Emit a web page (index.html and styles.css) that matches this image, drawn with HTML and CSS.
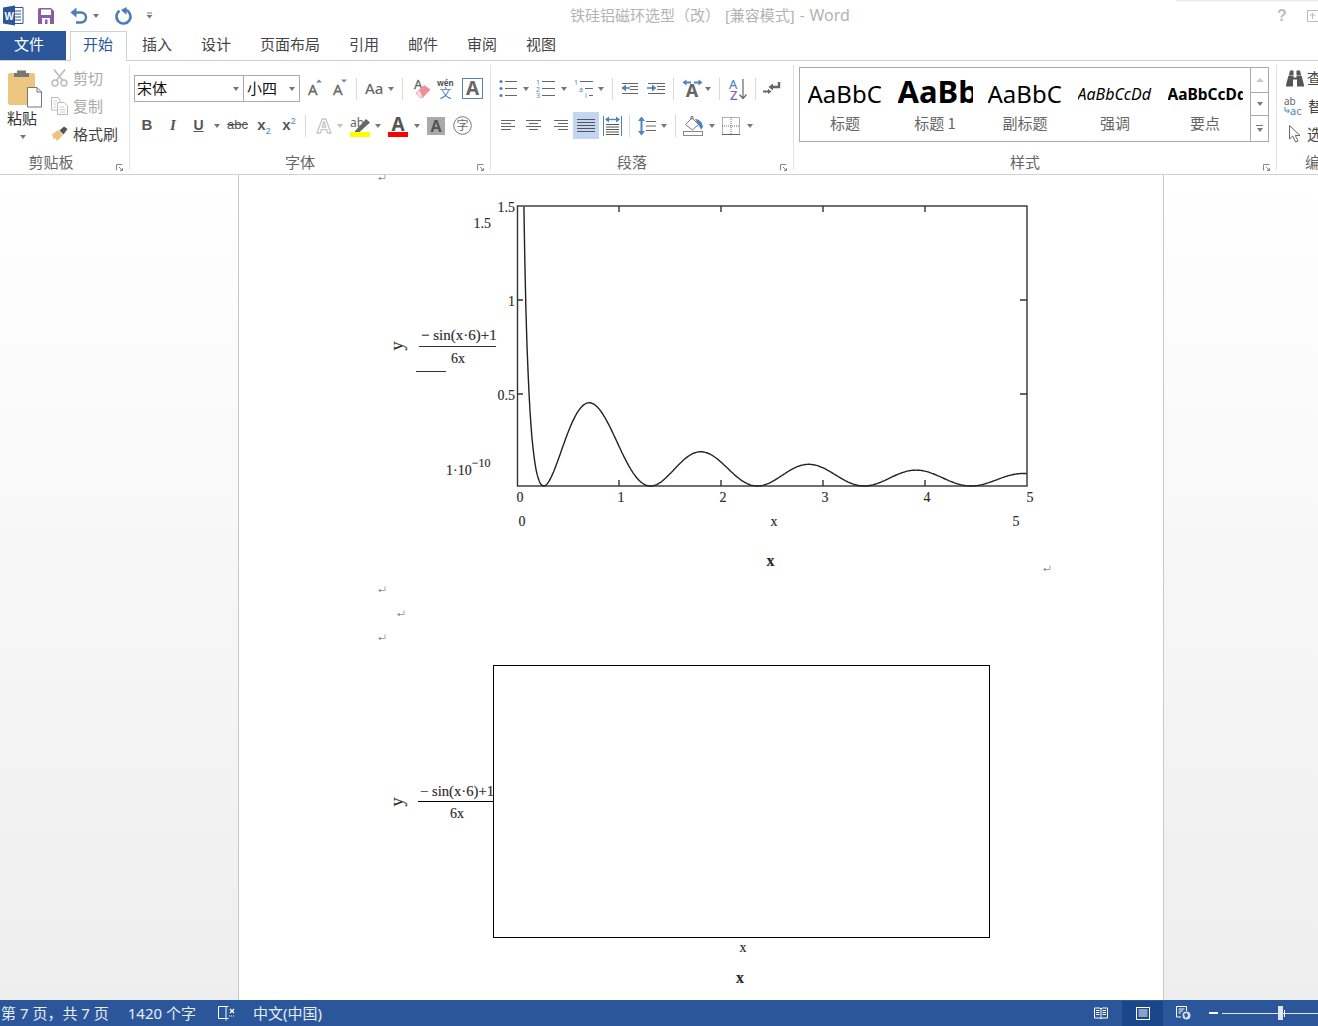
FILE: index.html
```html
<!DOCTYPE html>
<html lang="zh-CN">
<head>
<meta charset="utf-8">
<title>铁硅铝磁环选型（改） [兼容模式] - Word</title>
<link rel="stylesheet" href="styles.css">
</head>
<body>
<svg class="sprite" width="0" height="0"><symbol id="mark" viewBox="0 0 9 8"><path d="M8 0.5V4.5H2" fill="none" stroke="#999" stroke-width="0.9"/><path d="M3.6 2.8L1 4.5L3.6 6.2Z" fill="#888"/></symbol></svg>
<div class="app">
  <header class="titlebar">
    <svg class="ic ml3" width="21" height="21" viewBox="0 0 21 21"><path d="M8 2.5H20V18.5H8" fill="#fff" stroke="#2b579a"/><path d="M11 6h7M11 9h7M11 12h7M11 15h7" stroke="#2b579a"/><path d="M0 2.5L12 0.5V20.5L0 18.5Z" fill="#2b579a"/><text x="1.5" y="15" class="logo-w">W</text></svg>
    <svg class="ic ml14" width="16" height="16" viewBox="0 0 16 16"><path d="M0 1.5A1.5 1.5 0 0 1 1.5 0H13L16 3V16H0Z" fill="#8b5ba8"/><rect x="3" y="1.5" width="10" height="5.5" fill="#fff"/><rect x="4" y="10" width="8" height="6" fill="#fff"/><rect x="7" y="11.5" width="2.5" height="4.5" fill="#8b5ba8"/></svg>
    <svg class="ic ml16" width="18" height="17" viewBox="0 0 18 17"><path d="M2.5 5.5H11A5 5 0 0 1 11 15.5H6" fill="none" stroke="#4a7eb8" stroke-width="2.4"/><path d="M6.5 0.5V10.5L0.5 5.5Z" fill="#4a7eb8"/></svg>
    <span class="caret ml5"></span>
    <svg class="ic ml15" width="18" height="18" viewBox="0 0 18 18"><path d="M5.5 3.8A7 7 0 1 0 12 3" fill="none" stroke="#4a7eb8" stroke-width="2.6"/><path d="M12.5 0L12.5 8L7 3Z" fill="#4a7eb8"/></svg>
    <svg class="ic ml14" width="7" height="7" viewBox="0 0 7 7"><path d="M1 1H6" stroke="#777"/><path d="M0.5 3H6.5L3.5 6.5Z" fill="#777"/></svg>
    <div class="doc-title">铁硅铝磁环选型（改） [兼容模式] - <span class="t-word">Word</span></div>
    <div class="win-controls">
      <span class="help">?</span>
      <svg class="ic ml20" width="11" height="15" viewBox="0 0 11 15"><path d="M0.5 2.5H11M0.5 2.5V13.5H11" fill="none" stroke="#bbb"/><path d="M5.5 11V6M3 8L5.5 5.5L8 8" fill="none" stroke="#bbb"/></svg>
    </div>
    <div class="shade"></div>
  </header>

  <nav class="tabs">
    <div class="tab-file">文件</div>
    <div class="tab-active">开始</div>
    <div class="tab-list">
      <span>插入</span><span>设计</span><span>页面布局</span><span>引用</span><span>邮件</span><span>审阅</span><span>视图</span>
    </div>
  </nav>

  <section class="ribbon">
    <div class="group g-clip">
      <div class="clip-body">
        <div class="paste">
          <svg class="ic paste-ic" width="34" height="38" viewBox="0 0 34 38"><rect x="0" y="4" width="27" height="32" rx="2" fill="#ecc57e"/><path d="M9 4V1.5H18V4H21V8H6V4Z" fill="#777"/><path d="M19.5 18.5H29L33.5 23V38H19.5Z" fill="#fff" stroke="#777"/><path d="M29 18.5V23H33.5" fill="none" stroke="#777"/></svg>
          <div class="paste-label">粘贴</div>
          <span class="caret paste-caret"></span>
        </div>
        <div class="clip-list">
          <div class="clip-row off"><svg class="ic" width="17" height="18" viewBox="0 0 17 18"><path d="M3 0.5L12 12M14 0.5L5 12" stroke="#bbb" stroke-width="1.6"/><circle cx="4" cy="14" r="3" fill="#fff" stroke="#bbb" stroke-width="1.4"/><circle cx="13" cy="14" r="3" fill="#fff" stroke="#bbb" stroke-width="1.4"/></svg><span>剪切</span></div>
          <div class="clip-row off"><svg class="ic" width="17" height="18" viewBox="0 0 17 18"><path d="M0.5 0.5H7L9 3V13H0.5Z" fill="#fff" stroke="#bbb"/><path d="M6.5 5.5H13L16.5 9V17.5H6.5Z" fill="#fff" stroke="#bbb"/><path d="M2.5 4H6M2.5 7H5M2.5 10H5M8.5 10H13M8.5 12.5H14.5M8.5 15H14.5" stroke="#ccc"/></svg><span>复制</span></div>
          <div class="clip-row"><svg class="ic" width="17" height="16" viewBox="0 0 17 16"><path d="M1 8.5L7 4L12 9L6 15L4 12L2.5 13Z" fill="#edc27a"/><path d="M8.5 4.5L13 0.5L16.5 3L12.5 8.5Z" fill="#555"/></svg><span>格式刷</span></div>
        </div>
      </div>
      <div class="group-foot"><span class="group-name name-clip">剪贴板</span><svg class="launcher" width="7" height="7" viewBox="0 0 7 7"><path d="M0.5 6.5V0.5H6.5M3 3L6.5 6.5M6.5 4V6.5H4" fill="none" stroke="#888"/></svg></div>
    </div>
    <div class="divider"></div>

    <div class="group g-font">
      <div class="row row-top">
        <div class="combo combo-name"><span>宋体</span><span class="caret"></span></div>
        <div class="combo combo-size"><span>小四</span><span class="caret"></span></div>
        <svg class="ic ml8" width="15" height="20" viewBox="0 0 15 20"><text x="0" y="16" class="t-a">A</text><path d="M8 3.5L11 0.5L14 3.5Z" fill="#5b8ec4"/></svg>
        <svg class="ic ml10" width="15" height="20" viewBox="0 0 15 20"><text x="0" y="16" class="t-a">A</text><path d="M8 0.5H14L11 3.5Z" fill="#5b8ec4"/></svg>
        <span class="sep ml8"></span>
        <span class="aa ml8">Aa</span>
        <span class="caret ml4"></span>
        <span class="sep ml8"></span>
        <svg class="ic ml10" width="19" height="21" viewBox="0 0 19 21"><text x="1" y="11" class="t-a small">A</text><path d="M3 15L11 7L17.5 11.5L10 19.5H7Z" fill="#ee8f98"/><path d="M3 15L7 19.5H10L6.5 12Z" fill="#fbdfe2" stroke="#ee8f98" stroke-width="0.6"/></svg>
        <svg class="ic ml5" width="17" height="21" viewBox="0 0 17 21"><text x="0" y="8" class="t-w">wén</text><text x="2.5" y="20" class="t-wen">文</text></svg>
        <svg class="ic ml8" width="21" height="21" viewBox="0 0 21 21"><rect x="0.5" y="0.5" width="20" height="20" fill="#fff" stroke="#4f84bc"/><text x="10.5" y="17" class="t-box">A</text></svg>
      </div>
      <div class="row row-low">
        <span class="fmt fmt-b ml7">B</span>
        <span class="fmt fmt-i ml14">I</span>
        <span class="fmt fmt-u ml13">U</span>
        <span class="caret ml9"></span>
        <span class="fmt fmt-s ml7">abc</span>
        <span class="fmt fmt-x ml8">x<sub>2</sub></span>
        <span class="fmt fmt-x ml9">x<sup>2</sup></span>
        <span class="sep ml8"></span>
        <svg class="ic ml9" width="18" height="22" viewBox="0 0 18 22"><text x="9" y="18" class="t-out">A</text></svg>
        <span class="caret caret-off ml4"></span>
        <svg class="ic ml7 hl" width="21" height="21" viewBox="0 0 21 21"><text x="0" y="11" class="t-ab">ab</text><path d="M5 15L16 3L20 6.500L9 16.500L5 16.500Z" fill="#666"/><rect x="0" y="16" width="20" height="5" fill="#ff0"/></svg>
        <span class="caret ml4"></span>
        <svg class="ic ml7 hl" width="21" height="21" viewBox="0 0 21 21"><text x="10" y="15" class="t-red">A</text><rect x="0" y="16" width="20" height="5" fill="#f00"/></svg>
        <span class="caret ml5"></span>
        <svg class="ic ml7" width="18" height="18" viewBox="0 0 18 18"><rect width="18" height="18" fill="#aaa"/><text x="9" y="15" class="t-grey">A</text></svg>
        <svg class="ic ml8" width="19" height="19" viewBox="0 0 19 19"><circle cx="9.5" cy="9.5" r="8.800" fill="none" stroke="#777"/><text x="9.5" y="14" class="t-zi">字</text></svg>
      </div>
      <div class="group-foot"><span class="group-name name-font">字体</span><svg class="launcher" width="7" height="7" viewBox="0 0 7 7"><path d="M0.5 6.5V0.5H6.5M3 3L6.5 6.5M6.5 4V6.5H4" fill="none" stroke="#888"/></svg></div>
    </div>
    <div class="divider"></div>

    <div class="group g-para">
      <div class="row row-top">
        <svg class="ic" width="19" height="19" viewBox="0 0 19 19"><g fill="#4f84bc"><circle cx="2" cy="2.5" r="1.6"/><circle cx="2" cy="9.5" r="1.6"/><circle cx="2" cy="16.5" r="1.6"/></g><path d="M6 2.5H18M6 9.5H18M6 16.5H18" stroke="#666"/></svg>
        <span class="caret ml5"></span>
        <svg class="ic ml7" width="20" height="19" viewBox="0 0 20 19"><text x="0" y="5.5" class="t-n">1</text><text x="0" y="12.5" class="t-n">2</text><text x="0" y="19" class="t-n">3</text><path d="M6 2.5H19M6 9.5H19M6 16.5H19" stroke="#666"/></svg>
        <span class="caret ml5"></span>
        <svg class="ic ml7" width="20" height="19" viewBox="0 0 20 19"><text x="0" y="5.5" class="t-n">1</text><text x="5" y="12.5" class="t-n">a</text><text x="11" y="19" class="t-n">i</text><path d="M6 2.5H19M11 9.5H19M15 16.5H19" stroke="#666"/></svg>
        <span class="caret ml4"></span>
        <span class="sep ml8"></span>
        <svg class="ic ml8" width="19" height="13" viewBox="0 0 19 13"><path d="M1 1.5H17M9 4.5H17M9 7.5H17M1 11.500H17" stroke="#666"/><path d="M1 6H9" stroke="#4f84bc" stroke-width="1.6"/><path d="M5 2.5L0.500 6L5 9.500Z" fill="#4f84bc"/></svg>
        <svg class="ic ml7" width="19" height="13" viewBox="0 0 19 13"><path d="M1 1.5H18M10 4.5H18M10 7.5H18M1 11.500H18" stroke="#666"/><path d="M0 6H7" stroke="#4f84bc" stroke-width="1.6"/><path d="M5 2.5L9.500 6L5 9.500Z" fill="#4f84bc"/></svg>
        <span class="sep ml7"></span>
        <svg class="ic ml8" width="21" height="19" viewBox="0 0 21 19"><path d="M2 3.5H9M12 3.500H19" stroke="#4f84bc" stroke-width="1.8"/><path d="M4.500 0.500L0.500 3.500L4.500 6.500ZM16.500 0.500L20.500 3.500L16.500 6.500Z" fill="#4f84bc"/><text x="10" y="18" class="t-xa">A</text></svg>
        <span class="caret ml2"></span>
        <span class="sep ml8"></span>
        <svg class="ic ml9" width="19" height="22" viewBox="0 0 19 22"><text x="0" y="11" class="t-sa">A</text><text x="1" y="22" class="t-sz">Z</text><path d="M14 1V20M10.5 16.500L14 20.500L17.500 16.500" fill="none" stroke="#666" stroke-width="1.2"/></svg>
        <span class="sep ml7"></span>
        <svg class="ic ml7" width="18" height="15" viewBox="0 0 18 15"><path d="M16 1V6H9" fill="none" stroke="#666" stroke-width="2.4"/><path d="M10 2.5L5.5 6L10 9.5Z" fill="#666"/><path d="M0 10.5H6" stroke="#666" stroke-width="2"/><path d="M5 8L8.5 10.5L5 13Z" fill="#666"/></svg>
      </div>
      <div class="row row-low">
        <svg class="ic ml2" width="15" height="13" viewBox="0 0 15 13"><path d="M0 1.5H14M0 4.5H10M0 7.5H14M0 10.5H10" stroke="#666"/></svg>
        <svg class="ic ml10" width="15" height="13" viewBox="0 0 15 13"><path d="M0 1.5H15M3 4.5H12M0 7.5H15M3 10.5H12" stroke="#666"/></svg>
        <svg class="ic ml12" width="15" height="13" viewBox="0 0 15 13"><path d="M1 1.5H15M5 4.5H15M1 7.5H15M5 10.5H15" stroke="#666"/></svg>
        <div class="justify ml5"><svg class="ic" width="18" height="15" viewBox="0 0 18 15"><path d="M0 1.5H18M0 4.5H18M0 7.5H18M0 10.5H18M0 13.5H18" stroke="#555"/></svg></div>
        <svg class="ic ml4" width="19" height="20" viewBox="0 0 19 20"><path d="M3 3.500H16" stroke="#4f84bc" stroke-width="1.4"/><path d="M6 0.500L2 3.500L6 6.500ZM13 0.500L17 3.500L13 6.500Z" fill="#4f84bc"/><path d="M0.5 0V20M18.500 0V20" stroke="#4f84bc"/><path d="M3 8.500H16M3 11H16M3 13.500H16M3 16H16M3 18.500H16" stroke="#555"/></svg>
        <span class="sep ml7"></span>
        <svg class="ic ml8" width="18" height="20" viewBox="0 0 18 20"><path d="M3.5 2V18" stroke="#4f84bc" stroke-width="2"/><path d="M0 5L3.5 0.5L7 5ZM0 15L3.5 19.5L7 15Z" fill="#4f84bc"/><path d="M8 5.5H18M8 10H18M8 14.5H18" stroke="#666"/></svg>
        <span class="caret ml5"></span>
        <span class="sep ml8"></span>
        <svg class="ic ml7" width="21" height="20" viewBox="0 0 21 20"><path d="M2.500 8.500L9 2L15.500 8.500L9.500 14Z" fill="#fff" stroke="#777"/><path d="M8 4V0.500H10V3" fill="none" stroke="#777"/><path d="M12 3C16 3 19.500 6 20 11L18 13.500L16 10Z" fill="#4f84bc"/><rect x="0.5" y="15.5" width="19" height="4" fill="#fff" stroke="#888"/></svg>
        <span class="caret ml5"></span>
        <svg class="ic ml7" width="18" height="18" viewBox="0 0 18 18"><path d="M0.5 0.500H17.500V17.500M0.500 0.500V17.500M9 0V17M0 9H18" fill="none" stroke="#666" stroke-dasharray="1 1"/><path d="M0 17.500H18" stroke="#666"/></svg>
        <span class="caret ml7"></span>
      </div>
      <div class="group-foot"><span class="group-name name-para">段落</span><svg class="launcher" width="7" height="7" viewBox="0 0 7 7"><path d="M0.5 6.5V0.5H6.5M3 3L6.5 6.5M6.5 4V6.5H4" fill="none" stroke="#888"/></svg></div>
    </div>
    <div class="divider"></div>

    <div class="group g-style">
      <div class="gallery">
        <div class="style-item"><div class="preview p-title">AaBbC</div><div class="style-name">标题</div></div>
        <div class="style-item"><div class="preview p-h1">AaBbC</div><div class="style-name">标题 1</div></div>
        <div class="style-item"><div class="preview p-title">AaBbC</div><div class="style-name">副标题</div></div>
        <div class="style-item"><div class="preview p-em">AaBbCcDd</div><div class="style-name">强调</div></div>
        <div class="style-item"><div class="preview p-strong">AaBbCcDd</div><div class="style-name">要点</div></div>
        <div class="gallery-scroll">
          <div class="sc sc-up"><span class="tri-up"></span></div>
          <div class="sc sc-mid"><span class="caret"></span></div>
          <div class="sc sc-more"><span class="more-line"></span><span class="caret"></span></div>
        </div>
      </div>
      <div class="group-foot"><span class="group-name">样式</span><svg class="launcher" width="7" height="7" viewBox="0 0 7 7"><path d="M0.5 6.5V0.5H6.5M3 3L6.5 6.5M6.5 4V6.5H4" fill="none" stroke="#888"/></svg></div>
    </div>
    <div class="divider"></div>

    <div class="group g-edit">
      <div class="edit-list">
        <div class="edit-row"><svg class="ic" width="18" height="17" viewBox="0 0 18 17"><path d="M3 5L4 0.500H7.500V5ZM10.500 5V0.500H14L15 5Z" fill="#555"/><path d="M2.500 5.500H7.500V7.500H10.500V5.500H15.500L18 15V16.500H11V9.500H7V16.500H0V15Z" fill="#555"/></svg><span>查找</span></div>
        <div class="edit-row"><svg class="ic ab-ic" width="20" height="18" viewBox="0 0 20 18"><text x="0" y="8" class="t-rb">ab</text><text x="6" y="18" class="t-rc">ac</text><path d="M1 10V14H5M3.500 12L5.500 14L3.500 16" fill="none" stroke="#4f84bc"/></svg><span>替换</span></div>
        <div class="edit-row"><svg class="ic ml3" width="12" height="18" viewBox="0 0 12 18"><path d="M0.5 0.5V14L3.7 11L6.5 17L9 16L6.3 10.5H11Z" fill="#fff" stroke="#666"/></svg><span class="edit-t3">选择</span></div>
      </div>
      <div class="group-foot foot-edit"><span class="group-name">编辑</span></div>
    </div>
  </section>

  <main class="doc">
    <div class="page">
      <svg class="fig fig-one" width="700" height="403" viewBox="370 175 700 403">
        <use href="#mark" x="377" y="174" width="9" height="8"/>
        <rect x="517.5" y="206" width="509.5" height="280" class="frame"/>
        <path class="tick" d="M619 206v6M721 206v6M823 206v6M925 206v6M619 486v-6M721 486v-6M823 486v-6M925 486v-6M517 300h6M517 394h6M1027 300h-7M1027 394h-7"/>
        <path id="curve" class="curve" d=""/>
        <text class="pt end" x="515" y="212">1.5</text>
        <text class="pt end" x="491" y="228">1.5</text>
        <text class="pt end" x="515" y="306">1</text>
        <text class="pt end" x="515" y="400">0.5</text>
        <text class="pt" x="446" y="475">1·10<tspan class="sup" dy="-8">−10</tspan></text>
        <text class="pt pt-y" transform="translate(403 346) rotate(-90)">y</text>
        <text class="pt pt-f" x="421" y="340">− sin(x·6)+1</text>
        <path class="rule" d="M419 346.5H496M416 371.5H446"/>
        <text class="pt" x="451" y="363">6x</text>
        <text class="pt mid" x="520" y="502">0</text>
        <text class="pt mid" x="621" y="502">1</text>
        <text class="pt mid" x="723" y="502">2</text>
        <text class="pt mid" x="825" y="502">3</text>
        <text class="pt mid" x="927" y="502">4</text>
        <text class="pt mid" x="1030" y="502">5</text>
        <text class="pt mid" x="522" y="526">0</text>
        <text class="pt mid" x="774" y="526">x</text>
        <text class="pt mid" x="1016" y="526">5</text>
        <text class="pt pt-x mid" x="770.5" y="566">x</text>
        <use href="#mark" x="1042" y="565" width="9" height="8"/>
      </svg>
      <div class="mark-row"><svg class="mark" width="9" height="8"><use href="#mark"/></svg></div>
      <div class="mark-row indent"><svg class="mark" width="9" height="8"><use href="#mark"/></svg></div>
      <div class="mark-row"><svg class="mark" width="9" height="8"><use href="#mark"/></svg></div>
      <svg class="fig fig-two" width="700" height="350" viewBox="370 650 700 350">
        <rect x="493.5" y="665.5" width="496" height="272" class="frame-thin"/>
        <path class="rule-thin" d="M418 801.5H493"/>
        <text class="pt pt-y" transform="translate(403 802) rotate(-90)">y</text>
        <text class="pt pt-f pt-f2" x="420" y="796">− sin(x·6)+1</text>
        <text class="pt" x="450" y="818">6x</text>
        <text class="pt mid" x="743" y="952">x</text>
        <text class="pt pt-x mid" x="740" y="983">x</text>
      </svg>
    </div>
  </main>

  <footer class="status">
    <span class="st-page">第 7 页，共 7 页</span>
    <span class="st-words">1420 个字</span>
    <svg class="ic st-book" width="18" height="16" viewBox="0 0 18 16"><path d="M8 1.5H0.5V13.5H8M8 1.5V15.5M8 1.5L10.5 1.5M8 13.5H10.5" fill="none" stroke="#fff"/><path d="M12 4L16 8M16 4L12 8" stroke="#fff" stroke-width="1.4"/><path d="M11 11H17" stroke="#fff" stroke-dasharray="1 1"/></svg>
    <span class="st-lang">中文(中国)</span>
    <div class="st-right">
      <svg class="ic" width="14" height="13" viewBox="0 0 14 13"><path d="M0.5 1H6L7 2L8 1H13.5V11H8L7 12L6 11H0.5Z" fill="none" stroke="#fff"/><path d="M2 3.5H5.5M2 5.5H5.5M2 7.5H5.5M8.5 3.5H12M8.5 5.5H12M8.5 7.5H12M7 2V12" stroke="#fff"/></svg>
      <div class="st-active"><svg class="ic" width="14" height="13" viewBox="0 0 14 13"><rect x="0.5" y="0.5" width="13" height="12" fill="none" stroke="#fff"/><path d="M2.5 3H11.5M2.5 5H11.5M2.5 7H11.5M2.5 9H11.5" stroke="#fff"/></svg></div>
      <svg class="ic ml13" width="15" height="14" viewBox="0 0 15 14"><path d="M10.5 5V0.5H0.5V11H5" fill="none" stroke="#fff"/><path d="M2.5 3H8.5M2.5 5H7M2.5 7H5" stroke="#fff"/><circle cx="10.5" cy="9.5" r="4" fill="#d6deea"/><path d="M8 8L11 7L12 10L9.5 12" fill="#2b579a"/></svg>
      <span class="zoom-minus"></span>
      <div class="slider"><span class="thumb"></span><span class="thumb-tick"></span></div>
    </div>
  </footer>
</div>
<script src="plot.js"></script>
</body>
</html>
```
FILE: styles.css
```css
* { box-sizing: border-box; }
html, body { margin: 0; padding: 0; }
body {
  width: 1318px;
  height: 1026px;
  overflow: hidden;
  background: #fff;
  color: #444;
  font: 15px/20px "Noto Sans CJK SC", "Noto Sans", sans-serif;
}
.sprite { position: absolute; }
.app { display: flex; flex-direction: column; height: 1026px; width: 1318px; overflow: hidden; }
.ic { display: block; flex: none; overflow: visible; }

.ml2 { margin-left: 2px; } .ml3 { margin-left: 3px; } .ml4 { margin-left: 4px; }
.ml5 { margin-left: 5px; } .ml7 { margin-left: 7px; } .ml8 { margin-left: 8px; }
.ml9 { margin-left: 9px; } .ml10 { margin-left: 10px; } .ml12 { margin-left: 12px; }
.ml13 { margin-left: 13px; } .ml14 { margin-left: 14px; } .ml15 { margin-left: 15px; }
.ml16 { margin-left: 16px; } .ml20 { margin-left: 20px; }

.caret {
  display: block; flex: none; width: 0; height: 0;
  border-left: 3.5px solid transparent;
  border-right: 3.5px solid transparent;
  border-top: 4px solid #777;
}
.caret-off { border-top-color: #c4c4c4; }
.sep { display: block; flex: none; width: 1px; height: 22px; background: #d9d9d9; }

/* title bar */
.titlebar { position: relative; flex: none; height: 31px; display: flex; align-items: center; }
.logo-w { font: bold 10px "Liberation Sans", sans-serif; fill: #fff; }
.doc-title { margin-left: 417px; padding-bottom: 2px; color: #b3b3b3; white-space: pre; word-spacing: 1px; font-family: "Noto Sans", "Noto Sans CJK SC", sans-serif; font-size: 15px; }
.t-word { font-size: 16px; }
.win-controls { margin-left: auto; display: flex; align-items: center; width: 41px; flex: none; }
.help { width: 10px; font: bold 16px "Liberation Sans", sans-serif; color: #bdbdbd; text-align: center; }
.shade { position: absolute; left: 1176px; right: 0; top: 0; height: 2px; background: linear-gradient(#e6e6e6, #fafafa); }

/* tabs */
.tabs { flex: none; height: 30px; display: flex; border-bottom: 1px solid #d2d2d2; }
.tab-file { width: 66px; height: 29px; padding-right: 8px; background: #2b579a; color: #fff; text-align: center; line-height: 26px; }
.tab-active {
  width: 57px; height: 30px; margin-left: 4px; padding-right: 1px; background: #fff;
  border: 1px solid #d2d2d2; border-bottom: 0; color: #2b579a; text-align: center; line-height: 24px;
}
.tab-list { display: flex; gap: 29px; padding-left: 15px; line-height: 26px; }

/* ribbon */
.ribbon { flex: none; height: 114px; display: flex; border-bottom: 1px solid #d2d2d2; align-items: flex-start; }
.divider { flex: none; width: 1px; height: 105px; margin-top: 4px; background: #e1e1e1; }
.group { flex: none; height: 113px; display: flex; flex-direction: column; }
.group-foot { margin-top: auto; height: 20px; display: flex; align-items: center; position: relative; padding-bottom: 5px; flex: none; }
.group-name { flex: 1; text-align: center; color: #666; padding-right: 20px; }
.launcher { position: absolute; right: 6px; bottom: 3px; }
.name-clip { padding-right: 27px; }
.name-font { padding-right: 24px; }
.name-para { padding-right: 28px; }

.g-clip { width: 129px; }
.clip-body { display: flex; }
.paste { width: 44px; padding-left: 7px; display: flex; flex-direction: column; }
.paste-ic { margin: 8px 0 0 1px; }
.paste-label { width: 30px; text-align: center; margin-top: 1px; color: #333; }
.paste-caret { margin: 7px 0 0 13px; }
.clip-list { margin: 3px 0 0 7px; }
.clip-row { height: 28px; display: flex; align-items: center; gap: 5px; white-space: nowrap; }
.clip-row.off { color: #aaa; }

.g-font { width: 360px; padding-left: 4px; }
.g-para { width: 302px; padding-left: 8px; }
.row { display: flex; align-items: center; }
.row-top { height: 27px; margin-top: 14px; }
.row-low { height: 27px; margin-top: 10px; }

.combo {
  height: 27px; border: 1px solid #ababab; display: flex; align-items: center;
  justify-content: space-between; padding: 0 4px 2px 2px; color: #111; flex: none;
}
.combo-name { width: 110px; }
.combo-size { width: 56px; padding-left: 3px; border-left: 0; }
.combo .caret { margin-top: 2px; }

.t-a { font: 15px "Noto Sans", sans-serif; fill: #666; stroke: #666; stroke-width: 0.3; }
.t-a.small { font-size: 13px; }
.t-w { font: bold 8px "Noto Sans", sans-serif; fill: #555; }
.t-wen { font: 12px "Noto Sans CJK SC", sans-serif; fill: #4f84bc; }
.t-box { font: bold 19px "Noto Sans", sans-serif; fill: #666; text-anchor: middle; }
.t-out { font: bold 20px "Noto Sans", sans-serif; fill: #fff; stroke: #bbb; stroke-width: 1; text-anchor: middle; }
.t-ab { font: 12px "Noto Sans", sans-serif; fill: #666; }
.t-red { font: bold 19px "Noto Sans", sans-serif; fill: #555; text-anchor: middle; }
.t-grey { font: bold 16px "Noto Sans", sans-serif; fill: #555; text-anchor: middle; }
.t-zi { font: 12px "Noto Sans CJK SC", sans-serif; fill: #666; text-anchor: middle; }
.t-n { font: 7px "Noto Sans", sans-serif; fill: #4f84bc; }
.t-xa { font: bold 18px "Noto Sans", sans-serif; fill: #666; text-anchor: middle; }
.t-sa { font: 13px "Noto Sans", sans-serif; fill: #4f84bc; stroke: #4f84bc; stroke-width: 0.2; }
.t-sz { font: 13px "Noto Sans", sans-serif; fill: #8a5ba8; stroke: #8a5ba8; stroke-width: 0.2; }
.t-rb { font: 10px "Noto Sans", sans-serif; fill: #666; }
.t-rc { font: 11px "Noto Sans", sans-serif; fill: #4f84bc; }
.hl { margin-top: 1px; }

.aa { width: 19px; padding-bottom: 1px; font: 500 15px/20px "Noto Sans", sans-serif; color: #666; flex: none; white-space: nowrap; }
.fmt { display: block; flex: none; padding-bottom: 2px; font-family: "Liberation Sans", sans-serif; color: #555; text-align: center; line-height: 20px; white-space: nowrap; }
.fmt-b { width: 12px; font-weight: bold; font-size: 15px; }
.fmt-i { width: 12px; font: italic bold 15px/20px "Liberation Serif", serif; }
.fmt-u { width: 13px; font-weight: bold; font-size: 14px; text-decoration: underline; }
.fmt-s { width: 21px; font-size: 13px; text-decoration: line-through; }
.fmt-x { width: 16px; font-weight: bold; font-size: 15px; }
.fmt-x sub, .fmt-x sup { font-size: 9px; font-weight: normal; color: #4f84bc; line-height: 0; }
.justify { width: 26px; height: 27px; background: #c3d6f2; display: flex; align-items: center; justify-content: center; flex: none; }

.g-style { width: 482px; }
.gallery {
  margin: 6px 0 0 5px; width: 470px; height: 75px; border: 1px solid #ababab;
  display: flex;
}
.style-item { width: 90px; flex: none; display: flex; flex-direction: column; align-items: center; }
.preview { width: 75px; height: 45px; line-height: 52px; overflow: hidden; white-space: nowrap; color: #000; font-family: "Noto Sans", sans-serif; text-align: left; }
.p-title { font-size: 24px; }
.p-h1 { font-size: 31px; font-weight: bold; line-height: 46px; }
.p-em { font-size: 16px; font-style: italic; }
.p-strong { font-size: 15.5px; font-weight: bold; }
.style-name { color: #666; line-height: 20px; }
.gallery-scroll { flex: none; width: 18px; border-left: 1px solid #ababab; display: flex; flex-direction: column; }
.sc { display: flex; flex-direction: column; align-items: center; justify-content: center; gap: 2px; }
.sc-up { height: 25px; border-bottom: 1px solid #ababab; }
.sc-mid { height: 23px; border-bottom: 1px solid #ababab; }
.sc-more { flex: 1; }
.tri-up { width: 0; height: 0; border-left: 4px solid transparent; border-right: 4px solid transparent; border-bottom: 4px solid #c8c8c8; }
.more-line { width: 7px; height: 1px; background: #777; }

.g-edit { width: 41px; padding-left: 9px; }
.edit-list { margin-top: 3px; }
.edit-row { height: 28px; display: flex; align-items: center; gap: 3px; white-space: nowrap; color: #444; }
.ab-ic { margin-left: -2px; margin-right: 1px; }
.edit-t3 { margin-left: 3px; }
.foot-edit { margin-left: -9px; width: 90px; }
.foot-edit .group-name { text-align: left; padding: 0 0 0 28px; }

/* document */
.doc { flex: none; height: 825px; background: linear-gradient(#fff, #eee); }
.page {
  margin-left: 238px; width: 926px; height: 825px; background: #fff;
  border-left: 1px solid #c8c8c8; border-right: 1px solid #c8c8c8;
  display: flex; flex-direction: column;
}
.fig { display: block; flex: none; margin-left: 131px; }
.frame { fill: none; stroke: #333; stroke-width: 1.4; }
.frame-thin { fill: none; stroke: #000; stroke-width: 1; }
.tick { fill: none; stroke: #333; stroke-width: 1.4; }
.curve { fill: none; stroke: #222; stroke-width: 1.4; }
.rule { fill: none; stroke: #333; stroke-width: 1; }
.rule-thin { fill: none; stroke: #000; stroke-width: 1; }
.pt { font: 14px "Liberation Serif", serif; fill: #2a2a2a; stroke: #2a2a2a; stroke-width: 0.15; }
.pt.end { text-anchor: end; }
.pt.mid { text-anchor: middle; }
.sup { font-size: 12px; }
.pt-y { font-size: 18px; text-anchor: middle; }
.pt-f { font-size: 15px; }
.pt-f2 { font-size: 14.7px; }
.pt-x { font-size: 16px; font-weight: bold; }
.mark-row { flex: none; height: 24px; padding-left: 138px; display: flex; align-items: center; }
.mark-row.indent { padding-left: 157px; }
.mark { display: block; }

/* status bar */
.status { flex: none; height: 26px; background: #2b579a; color: #e6ecf6; display: flex; align-items: center; white-space: pre; font-family: "Noto Sans", "Noto Sans CJK SC", sans-serif; }
.st-page { margin-left: 1px; }
.st-words { margin-left: 19px; }
.st-book { margin-left: 22px; }
.st-lang { margin-left: 17px; }
.st-right { margin-left: auto; width: 224px; height: 26px; display: flex; align-items: center; flex: none; }
.st-active { margin-left: 14px; width: 41px; height: 25px; margin-top: 1px; background: #19478a; display: flex; align-items: center; justify-content: center; flex: none; }
.zoom-minus { display: block; flex: none; width: 9px; height: 2px; margin-left: 18px; background: #fff; }
.slider { position: relative; flex: none; width: 96px; height: 1px; margin-left: 4px; background: #dfe6f1; }
.thumb { position: absolute; left: 56px; top: -7px; width: 5px; height: 14px; background: #dfe6f1; }
.thumb-tick { position: absolute; left: 62px; top: -3px; width: 1px; height: 7px; background: #fff; }
```
FILE: plot.js
```js
var d = [], x = 0.0675, px, py;
for (; x <= 5; x += 0.01) {
  px = 517 + x * 102;
  py = 486 - ((1 - Math.sin(6 * x)) / (6 * x)) * 186.67;
  d.push((d.length ? "L" : "M") + px.toFixed(1) + " " + py.toFixed(1));
}
document.getElementById("curve").setAttribute("d", d.join(""));
```
